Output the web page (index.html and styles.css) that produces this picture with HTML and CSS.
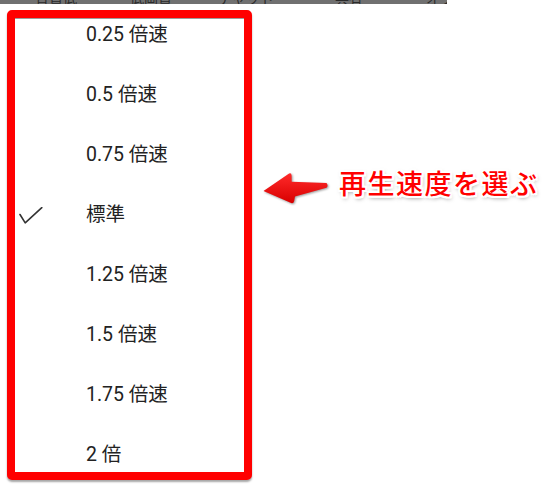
FILE: index.html
```html
<!DOCTYPE html>
<html lang="ja">
<head>
<meta charset="utf-8">
<title>再生速度</title>
<link rel="stylesheet" href="styles.css">
</head>
<body>
<div class="topbar">
  <span class="tb tb1">音質低</span>
  <span class="tb tb2">低画質</span>
  <span class="tb tb3">チャット</span>
  <span class="tb tb4">共有</span>
  <span class="tb tb5">オプション</span>
</div>
<div class="stage">
  <div class="frame">
    <ul class="menu">
      <li class="item"><span class="slot"></span><span class="txt">0.25 倍速</span></li>
      <li class="item"><span class="slot"></span><span class="txt">0.5 倍速</span></li>
      <li class="item"><span class="slot"></span><span class="txt">0.75 倍速</span></li>
      <li class="item"><span class="slot"><svg class="check" width="24" height="17" viewBox="0 0 24 17"><path d="M1 7.5 L6.2 15.8 L22.8 0.6" fill="none" stroke="#333" stroke-width="1.6" stroke-linecap="round" stroke-linejoin="round"/></svg></span><span class="txt">標準</span></li>
      <li class="item"><span class="slot"></span><span class="txt">1.25 倍速</span></li>
      <li class="item"><span class="slot"></span><span class="txt">1.5 倍速</span></li>
      <li class="item"><span class="slot"></span><span class="txt">1.75 倍速</span></li>
      <li class="item"><span class="slot"></span><span class="txt">2 倍</span></li>
    </ul>
  </div>
  <div class="note">
    <svg class="arrow" width="66" height="33" viewBox="0 0 66 33">
      <defs>
        <linearGradient id="ag" x1="0" y1="0" x2="0" y2="1">
          <stop offset="0" stop-color="#ff2a2a"/>
          <stop offset="1" stop-color="#d80000"/>
        </linearGradient>
      </defs>
      <path d="M0.5 19 L25 2.2 Q28.3 0 28.6 3.5 L28.7 9.7 L63.5 11 Q65.6 13.4 63.5 15.8 L32 24.5 L31.2 29 Q30.4 32.4 27 30.6 Z" fill="url(#ag)"/>
    </svg>
    <span class="label">再生速度を選ぶ</span>
  </div>
</div>
</body>
</html>
```

FILE: styles.css
```css
html, body {
  margin: 0;
  padding: 0;
  background: #ffffff;
}

body {
  width: 543px;
  height: 484px;
  overflow: hidden;
  font-family: Roboto, "Noto Sans CJK JP", sans-serif;
}

.topbar {
  width: 447px;
  height: 4px;
  background: #707070;
  overflow: hidden;
  display: flex;
  align-items: flex-end;
}

.tb {
  font-family: "Noto Sans CJK JP", sans-serif;
  font-size: 14px;
  line-height: 14px;
  color: #2a2a2a;
  white-space: nowrap;
  flex: none;
  margin-bottom: -1px;
}

.tb1 { margin-left: 35px; }
.tb2 { margin-left: 53px; }
.tb3 { margin-left: 46px; }
.tb4 { margin-left: 61px; }
.tb5 { margin-left: 63px; }

.stage {
  display: flex;
  align-items: flex-start;
  padding: 6px 0 0 7px;
}

.frame {
  flex: none;
  box-sizing: border-box;
  width: 245px;
  height: 470px;
  border: 8px solid #ff0000;
  border-radius: 5px;
  box-shadow: 0 2px 2px rgba(0, 0, 0, 0.35);
  background: #ffffff;
  overflow: hidden;
}

.menu {
  list-style: none;
  margin: 0;
  padding: 0;
  height: 454px;
  overflow: hidden;
  border-top: 1px solid #9c9c9c;
  box-sizing: border-box;
}

.item {
  box-sizing: border-box;
  height: 60px;
  padding-top: 3px;
  display: flex;
  align-items: flex-start;
}

.slot {
  flex: none;
  width: 71px;
  height: 25px;
  box-sizing: border-box;
  padding-left: 4px;
  padding-top: 2px;
  display: flex;
  align-items: center;
}

.check {
  display: block;
}

.txt {
  font-family: Roboto, "Noto Sans CJK JP", sans-serif;
  font-size: 19.5px;
  line-height: 25px;
  color: #222222;
  white-space: nowrap;
}

.note {
  display: flex;
  align-items: flex-start;
  margin-top: 156px;
  margin-left: 11px;
}

.arrow {
  flex: none;
  margin-top: 6px;
  filter: drop-shadow(1px 1px 1px rgba(0, 0, 0, 0.4));
}

.label {
  margin-left: 10px;
  font-family: "Noto Sans CJK JP", sans-serif;
  font-size: 27px;
  line-height: 33px;
  font-weight: 500;
  letter-spacing: 1.5px;
  color: #ff0000;
  white-space: nowrap;
  text-shadow:
    1px 0 0 #fff, -1px 0 0 #fff, 0 1px 0 #fff, 0 -1px 0 #fff,
    2px 0 0 #fff, -2px 0 0 #fff, 0 2px 0 #fff, 0 -2px 0 #fff,
    1px 1px 0 #fff, -1px -1px 0 #fff, 1px -1px 0 #fff, -1px 1px 0 #fff,
    2px 2px 0 #fff, -2px -2px 0 #fff, 2px -2px 0 #fff, -2px 2px 0 #fff,
    1px 2px 4px rgba(0, 0, 0, 0.55);
}
```
